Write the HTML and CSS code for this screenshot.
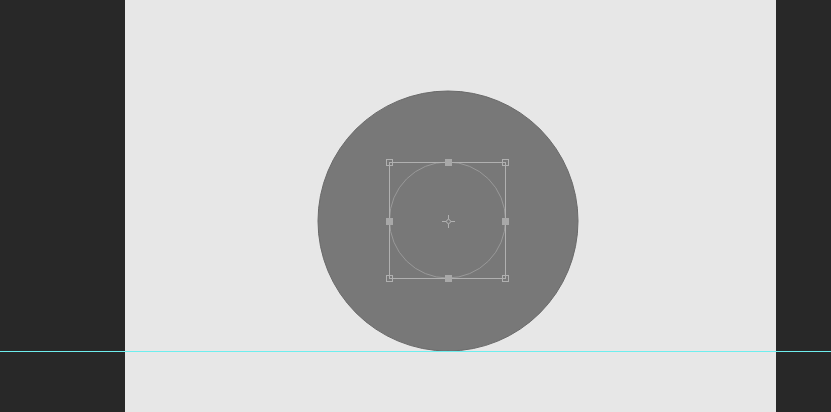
FILE: index.html
```html
<!DOCTYPE html>
<html lang="en">
<head>
    <meta charset="UTF-8">
    <title>Canvas</title>
    <link rel="stylesheet" href="styles.css">
</head>
<body>
    <div class="workspace">
        <div class="pasteboard left"></div>
        <div class="artboard">
            <svg class="art" width="651" height="412" viewBox="0 0 651 412">
                <circle cx="323" cy="221" r="130" fill="#787878" stroke="#6a6a6a" stroke-width="1"/>
                <g class="selection" fill="none" stroke="#b0b0b0" stroke-width="1">
                    <circle cx="322.5" cy="220" r="58" stroke="#999"/>
                    <rect x="264.5" y="162.5" width="116" height="116"/>
                    <rect x="261.5" y="159.5" width="6" height="6"/>
                    <rect x="377.5" y="159.5" width="6" height="6"/>
                    <rect x="261.5" y="275.5" width="6" height="6"/>
                    <rect x="377.5" y="275.5" width="6" height="6"/>
                    <rect x="320" y="159" width="7" height="7" fill="#a8a8a8" stroke="none"/>
                    <rect x="320" y="275" width="7" height="7" fill="#a8a8a8" stroke="none"/>
                    <rect x="261" y="218" width="7" height="7" fill="#a8a8a8" stroke="none"/>
                    <rect x="377" y="218" width="7" height="7" fill="#a8a8a8" stroke="none"/>
                    <circle cx="323.5" cy="221.5" r="2"/>
                    <path d="M323.5 215v4M323.5 224v4M317 221.5h4M326 221.5h4"/>
                </g>
            </svg>
        </div>
        <div class="pasteboard right"></div>
        <div class="guide"></div>
    </div>
</body>
</html>
```

FILE: styles.css
```css
body {
    margin: 0;
    background-color: #282828;
    font-family: "Liberation Sans", Arial, sans-serif;
    overflow: hidden;
}
.workspace {
    position: relative;
    display: flex;
    height: 412px;
}
.pasteboard.left {
    width: 125px;
    background-color: #282828;
}
.pasteboard.right {
    flex: 1;
    background-color: #282828;
}
.artboard {
    width: 651px;
    background-color: #e7e7e7;
}
.art {
    display: block;
}
.guide {
    position: absolute;
    left: 0;
    right: 0;
    top: 351px;
    height: 1px;
    background-color: #6eeeee;
}
```
